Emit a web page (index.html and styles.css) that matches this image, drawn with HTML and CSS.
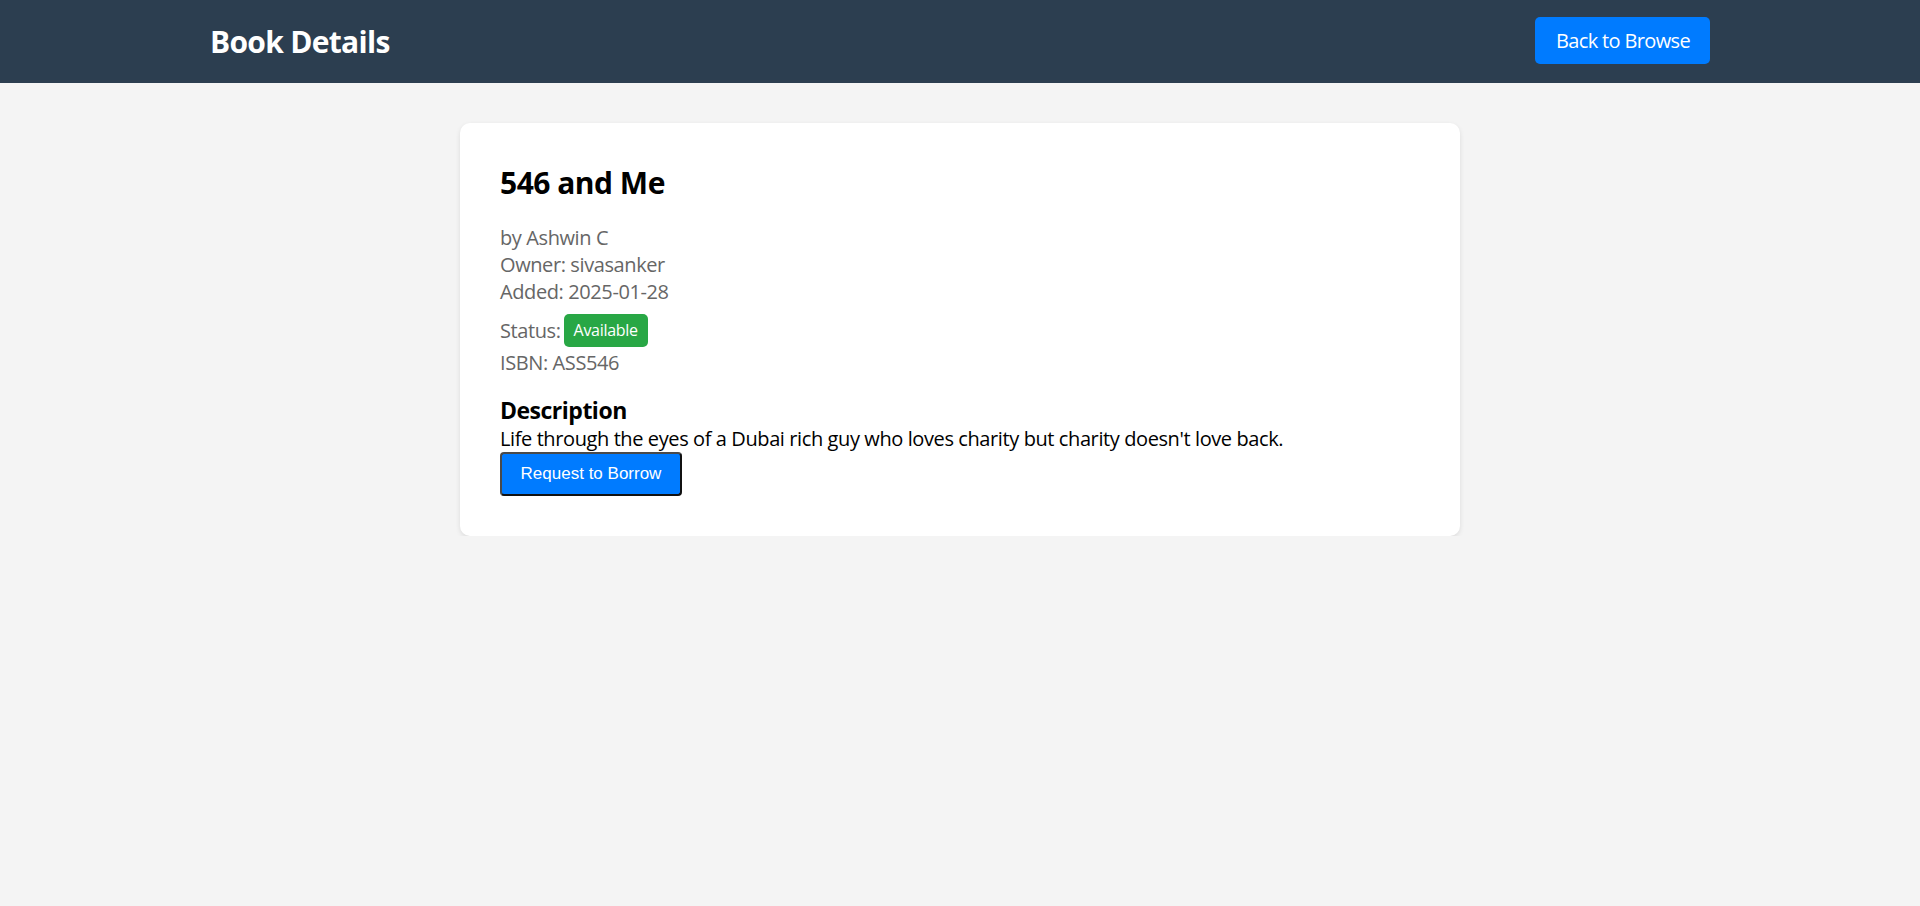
FILE: index.html
```html
<!DOCTYPE html>
<html lang="en">
<head>
<meta charset="utf-8">
<title>Book Details</title>
<link rel="stylesheet" href="styles.css">
</head>
<body>
<header class="topbar">
  <div class="topbar-inner">
    <h1 class="brand">Book Details</h1>
    <a class="btn-back" href="#">Back to Browse</a>
  </div>
</header>
<main class="page">
  <section class="card">
    <h2 class="book-title">546 and Me</h2>
    <div class="meta">
      <div class="meta-line">by Ashwin C</div>
      <div class="meta-line">Owner: sivasanker</div>
      <div class="meta-line">Added: 2025-01-28</div>
      <div class="meta-line status-line">Status: <span class="badge">Available</span></div>
      <div class="meta-line">ISBN: ASS546</div>
    </div>
    <h3 class="desc-title">Description</h3>
    <p class="desc">Life through the eyes of a Dubai rich guy who loves charity but charity doesn't love back.</p>
    <button class="btn-borrow" type="button">Request to Borrow</button>
  </section>
</main>
</body>
</html>
```
FILE: styles.css
```css
* { box-sizing: border-box; }
html, body { margin: 0; padding: 0; }
body {
  background: #f4f4f4;
  font-family: "Open Sans", "Noto Sans", sans-serif;
  font-size: 20px;
  color: #000;
}
.topbar {
  background: #2c3e50;
  height: 83px;
  display: flex;
  align-items: center;
}
.topbar-inner {
  width: 1500px;
  margin: 0 auto;
  display: flex;
  justify-content: space-between;
  align-items: center;
}
.brand {
  margin: 0;
  color: #fff;
  font-size: 30px;
  font-weight: 700;
  letter-spacing: -0.7px;
  line-height: 40px;
}
.btn-back {
  display: inline-block;
  background: #007bff;
  color: #fff;
  text-decoration: none;
  font-size: 20px;
  line-height: 27px;
  padding: 10px 20px 10px 21px;
  border-radius: 5px;
  letter-spacing: -0.65px;
  margin-top: -3px;
}
.page {
  padding-top: 40px;
}
.card {
  width: 1000px;
  margin: 0 auto;
  background: #fff;
  border-radius: 10px;
  box-shadow: 0 2px 5px rgba(0,0,0,0.1);
  padding: 40px;
}
.book-title {
  margin: 0 0 21px;
  font-size: 30px;
  line-height: 40px;
  font-weight: 700;
  letter-spacing: -0.5px;
}
.meta {
  color: #666;
  letter-spacing: -0.4px;
}
.meta-line {
  line-height: 27px;
}
.status-line {
  display: flex;
  align-items: center;
  gap: 3px;
  margin: 9px 0 2px;
}
.badge {
  display: inline-block;
  background: #28a745;
  color: #fff;
  font-size: 16px;
  line-height: 21px;
  padding: 6px 10px;
  border-radius: 5px;
  letter-spacing: -0.3px;
}
.desc-title {
  margin: 19px 0 0;
  font-size: 23px;
  line-height: 30px;
  font-weight: 700;
  letter-spacing: -0.5px;
}
.desc {
  margin: 0;
  line-height: 27px;
  letter-spacing: -0.4px;
}
.btn-borrow {
  display: block;
  font-family: "Liberation Sans", Arial, sans-serif;
  font-size: 17px;
  background: #007bff;
  color: #fff;
  border: 2px solid;
  border-color: #4a4a4a #111 #111 #4a4a4a;
  border-radius: 4px;
  width: 182px;
  height: 44px;
  padding: 0;
  margin-top: 0;
}
```
